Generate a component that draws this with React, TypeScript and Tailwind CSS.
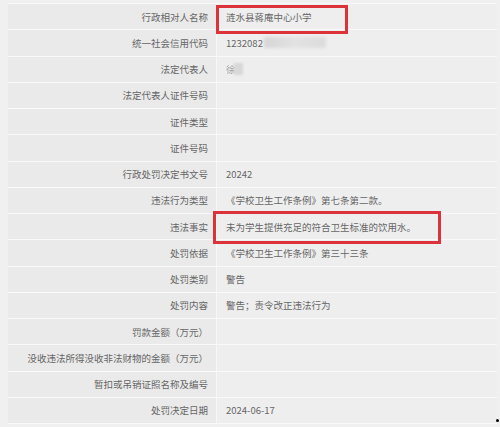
import React from "react";

type Row = { label: string; value?: React.ReactNode; highlight?: "name" | "fact" };

const rows: Row[] = [
  { label: "行政相对人名称", value: "涟水县蒋庵中心小学", highlight: "name" },
  {
    label: "统一社会信用代码",
    value: (
      <span className="flex items-center">
        1232082
        <span className="ml-[1px] inline-block h-[11px] w-[62px] rounded-[2px] bg-gradient-to-r from-[#d6d6d6] via-[#e2e2e2] to-[#dcdcdc] blur-[1.5px]" />
      </span>
    ),
  },
  {
    label: "法定代表人",
    value: (
      <span className="flex items-center">
        <span className="opacity-60">徐</span>
        <span className="-ml-[2px] inline-block h-[12px] w-[9px] bg-[#d8d8d8] blur-[1px]" />
      </span>
    ),
  },
  { label: "法定代表人证件号码" },
  { label: "证件类型" },
  { label: "证件号码" },
  { label: "行政处罚决定书文号", value: "20242" },
  { label: "违法行为类型", value: "《学校卫生工作条例》第七条第二款。" },
  { label: "违法事实", value: "未为学生提供充足的符合卫生标准的饮用水。", highlight: "fact" },
  { label: "处罚依据", value: "《学校卫生工作条例》第三十三条" },
  { label: "处罚类别", value: "警告" },
  { label: "处罚内容", value: "警告；责令改正违法行为" },
  { label: "罚款金额（万元）" },
  { label: "没收违法所得没收非法财物的金额（万元）" },
  { label: "暂扣或吊销证照名称及编号" },
  { label: "处罚决定日期", value: "2024-06-17" },
];

export default function App() {
  return (
    <div
      className="relative h-[427px] w-[500px] overflow-hidden bg-[#f0f0f0] pl-[8px] pr-[3px] pt-[3px] text-[9.5px] text-[#666666]"
      style={{ fontFamily: '"Noto Sans CJK SC", "Noto Sans", sans-serif' }}
    >
      <div className="border-t border-[#f8f8f8]">
        {rows.map((r) => (
          <div key={r.label} className="flex h-[26.25px] border-b border-[#f9f9f9]">
            <div className="flex w-[209px] items-center justify-end border-r border-[#f7f7f7] bg-[#eaeaea] pr-[8px]">
              {r.label}
            </div>
            <div className="relative flex flex-1 items-center bg-[#eeeeee] pl-[9px]">
              {r.value}
              {r.highlight === "name" && (
                <div className="absolute left-[-1px] top-[1px] z-10 h-[29px] w-[132px] border-[3.5px] border-solid border-[#dc3239]" />
              )}
              {r.highlight === "fact" && (
                <div className="absolute left-[-4px] top-[-3px] z-10 h-[33px] w-[228px] border-[3.5px] border-solid border-[#dc3239]" />
              )}
            </div>
          </div>
        ))}
      </div>
      <div className="absolute bottom-[5px] right-[1px] h-[3px] w-[3px] rounded-full bg-black" />
    </div>
  );
}
